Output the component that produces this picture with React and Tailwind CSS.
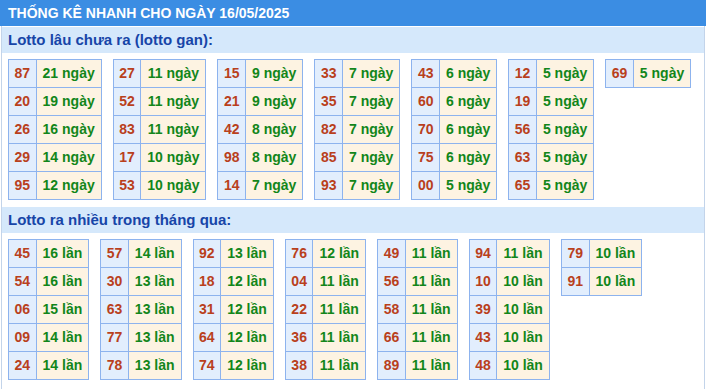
import React from 'react';

const GAN = [
  [['87', 21], ['20', 19], ['26', 16], ['29', 14], ['95', 12]],
  [['27', 11], ['52', 11], ['83', 11], ['17', 10], ['53', 10]],
  [['15', 9], ['21', 9], ['42', 8], ['98', 8], ['14', 7]],
  [['33', 7], ['35', 7], ['82', 7], ['85', 7], ['93', 7]],
  [['43', 6], ['60', 6], ['70', 6], ['75', 6], ['00', 5]],
  [['12', 5], ['19', 5], ['56', 5], ['63', 5], ['65', 5]],
  [['69', 5]],
];

const NHIEU = [
  [['45', 16], ['54', 16], ['06', 15], ['09', 14], ['24', 14]],
  [['57', 14], ['30', 13], ['63', 13], ['77', 13], ['78', 13]],
  [['92', 13], ['18', 12], ['31', 12], ['64', 12], ['74', 12]],
  [['76', 12], ['04', 11], ['22', 11], ['36', 11], ['38', 11]],
  [['49', 11], ['56', 11], ['58', 11], ['66', 11], ['89', 11]],
  [['94', 11], ['10', 10], ['39', 10], ['43', 10], ['48', 10]],
  [['79', 10], ['91', 10]],
];

const LottoTable = ({ rows, unit }) => (
  <table className="border-collapse border border-[#8db3ee]">
    <tbody>
      {rows.map(([num, count]) => (
        <tr key={num} className="h-[28px]">
          <td className="border border-[#8db3ee] bg-[#e2eefd] px-[5.5px] text-center text-[#b9401c]">{num}</td>
          <td className="border border-[#8db3ee] bg-[#fdf3e2] px-[6px] text-center text-[#12861a]">
            {count} {unit}
          </td>
        </tr>
      ))}
    </tbody>
  </table>
);

const Section = ({ title, tables, unit }) => (
  <div>
    <div className="h-[26px] bg-[#d5e8fb] px-[6px] text-[15px] leading-[26px] font-bold text-[#1745a8]">
      {title}
    </div>
    <div className="flex flex-wrap items-start gap-x-[11px] px-[6px] pt-[6px] pb-[7px]">
      {tables.map((rows, i) => (
        <LottoTable key={i} rows={rows} unit={unit} />
      ))}
    </div>
  </div>
);

export default function App() {
  return (
    <div className="w-[706px] h-[389px] overflow-hidden bg-white text-[14px] font-bold font-['Liberation_Sans',Arial,sans-serif]">
      <div className="h-[26px] bg-[#3b8de3] px-[8px] leading-[26px] text-white">
        THỐNG KÊ NHANH CHO NGÀY 16/05/2025
      </div>
      <div className="ml-px w-[704px] h-[363px] border-x border-[#c3d4ea] pt-px">
        <Section title="Lotto lâu chưa ra (lotto gan):" tables={GAN} unit="ngày" />
        <Section title="Lotto ra nhiều trong tháng qua:" tables={NHIEU} unit="lần" />
      </div>
    </div>
  );
}
